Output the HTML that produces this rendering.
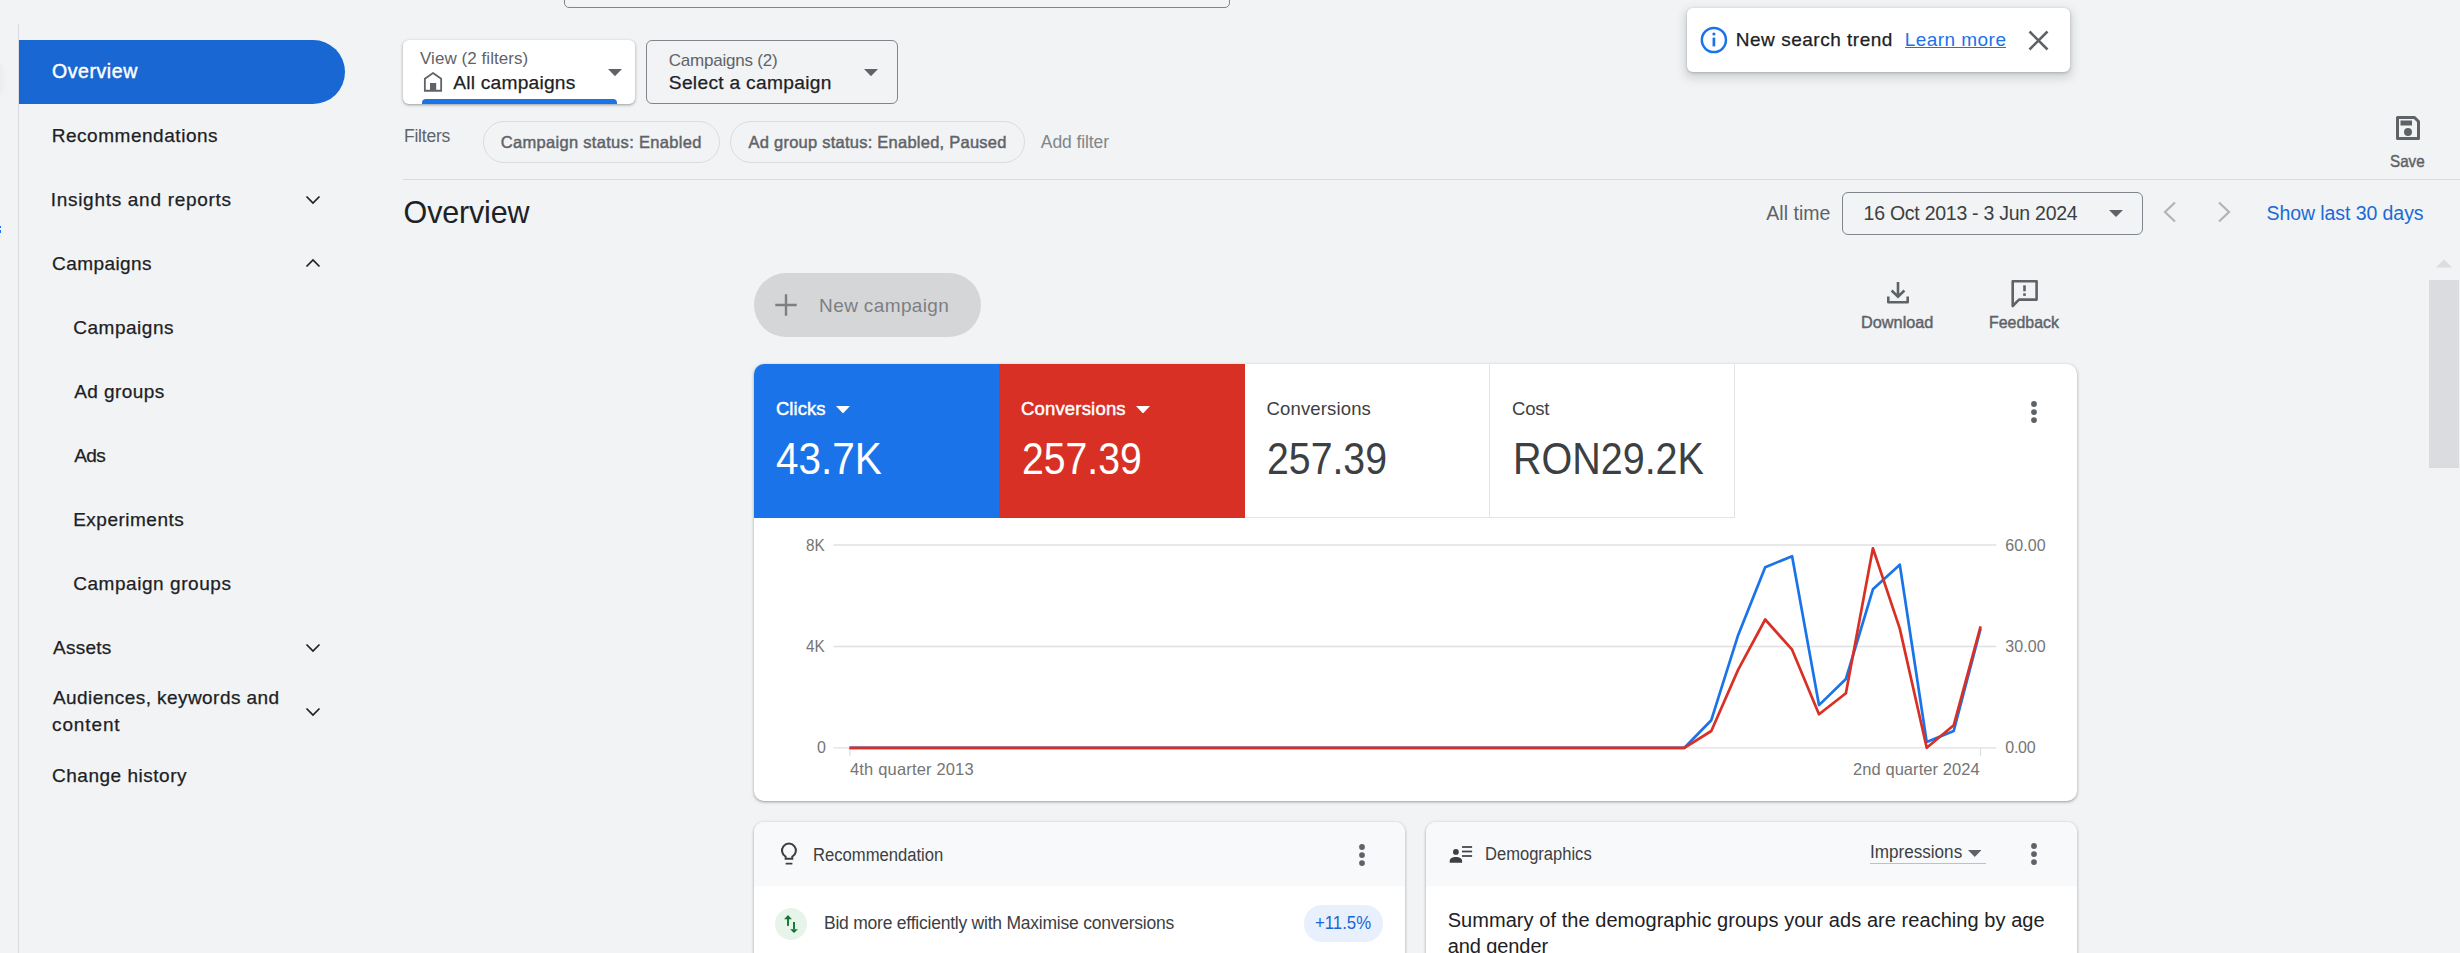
<!DOCTYPE html>
<html><head><meta charset='utf-8'><title>Overview - Google Ads</title>
<style>
html,body{margin:0;padding:0}
body{width:2460px;height:953px;overflow:hidden;background:#f1f3f4;position:relative;font-family:"Liberation Sans",sans-serif}
.t{position:absolute;white-space:nowrap}
.a{position:absolute;display:block}
.b{position:absolute;box-sizing:border-box}
</style></head><body>
<!-- left rail artifacts -->
<div class='b' style='left:-40px;top:50px;width:48px;height:60px;border-radius:50%;background:radial-gradient(closest-side,rgba(0,0,0,0.09),rgba(0,0,0,0))'></div>
<div class='b' style='left:0;top:226px;width:1px;height:2px;background:#1a73e8'></div>
<div class='b' style='left:0;top:230px;width:1px;height:3px;background:#1a73e8'></div>
<div class='b' style='left:18px;top:24px;width:1px;height:929px;background:#dadce0'></div>
<!-- nav -->
<div class='b' style='left:19px;top:40px;width:326px;height:64px;background:#1967d2;border-radius:0 32px 32px 0'></div>
<svg class='a' style='left:304.5px;top:194.5px' width='16' height='10' viewBox='0 0 16 10'><polyline points='1.5,1.5 8,8 14.5,1.5' fill='none' stroke='#202124' stroke-width='1.7'/></svg>
<svg class='a' style='left:304.5px;top:258px' width='16' height='10' viewBox='0 0 16 10'><polyline points='1.5,8.5 8,2 14.5,8.5' fill='none' stroke='#202124' stroke-width='1.7'/></svg>
<svg class='a' style='left:304.5px;top:642.5px' width='16' height='10' viewBox='0 0 16 10'><polyline points='1.5,1.5 8,8 14.5,1.5' fill='none' stroke='#202124' stroke-width='1.7'/></svg>
<svg class='a' style='left:304.5px;top:706.5px' width='16' height='10' viewBox='0 0 16 10'><polyline points='1.5,1.5 8,8 14.5,1.5' fill='none' stroke='#202124' stroke-width='1.7'/></svg>
<!-- search box remnant -->
<div class='b' style='left:564px;top:-50px;width:666px;height:58px;border:1.3px solid #80868b;border-radius:5px'></div>
<!-- view box -->
<div class='b' style='left:403px;top:40px;width:232px;height:64px;background:#fff;border-radius:6px;box-shadow:0 1px 2px rgba(60,64,67,.3),0 1px 3px 1px rgba(60,64,67,.15);overflow:hidden'>
  <div class='b' style='left:19px;top:59px;width:195px;height:6px;background:#1a73e8;border-radius:4px 4px 0 0'></div>
</div>
<svg class='a' style='left:423px;top:71px' width='20' height='22' viewBox='0 0 20 22'><path d='M10,2 L18.15,7.8 V19.75 H1.85 V7.8 Z' fill='none' stroke='#5f6368' stroke-width='1.8' stroke-linejoin='miter'/><rect x='7' y='12' width='6.2' height='8' fill='#5f6368'/></svg>
<svg class='a' style='left:607.5px;top:69px' width='14' height='7.2' viewBox='0 0 14 7.2'><polygon points='0,0 14,0 7.0,7.2' fill='#5f6368'/></svg>
<!-- campaigns box -->
<div class='b' style='left:646px;top:40px;width:252px;height:64px;border:1.3px solid #80868b;border-radius:6px'></div>
<svg class='a' style='left:863.5px;top:69px' width='14' height='7.2' viewBox='0 0 14 7.2'><polygon points='0,0 14,0 7.0,7.2' fill='#5f6368'/></svg>
<!-- filter chips -->
<div class='b' style='left:483px;top:121px;width:237px;height:42px;border:1px solid #dadce0;border-radius:21px'></div>
<div class='b' style='left:730px;top:121px;width:295px;height:42px;border:1px solid #dadce0;border-radius:21px'></div>
<div class='b' style='left:403px;top:179px;width:2057px;height:1px;background:#dadce0'></div>
<!-- save -->
<svg class='a' style='left:2394px;top:114px' width='28' height='28' viewBox='0 0 28 28'><path d='M3.5,3.5 H20.5 L24.5,7.5 V24.5 H3.5 Z' fill='none' stroke='#5f6368' stroke-width='3' stroke-linejoin='round'/><rect x='6.5' y='6.5' width='11.5' height='5' fill='#5f6368'/><circle cx='14' cy='18' r='4' fill='#5f6368'/></svg>
<!-- toast -->
<div class='b' style='left:1687px;top:8px;width:383px;height:64px;background:#fff;border-radius:6px;box-shadow:0 1px 3px 0 rgba(60,64,67,.3),0 4px 8px 3px rgba(60,64,67,.15)'></div>
<svg class='a' style='left:1699px;top:26px' width='30' height='30' viewBox='0 0 30 30'><circle cx='14.9' cy='14' r='12.05' fill='none' stroke='#1a73e8' stroke-width='2.5'/><rect x='13.55' y='11.6' width='2.7' height='8.8' fill='#1a73e8'/><circle cx='14.9' cy='8' r='1.6' fill='#1a73e8'/></svg>
<div class='b' style='left:1904.5px;top:47px;width:101.5px;height:1.4px;background:#1a73e8'></div>
<svg class='a' style='left:2027px;top:29px' width='23' height='23' viewBox='0 0 23 23'><path d='M2.5,2.5 L20.5,20.5 M20.5,2.5 L2.5,20.5' stroke='#5f6368' stroke-width='2.6'/></svg>
<!-- date -->
<div class='b' style='left:1842px;top:192px;width:301px;height:43px;border:1.3px solid #80868b;border-radius:6px'></div>
<svg class='a' style='left:2108.5px;top:210px' width='14' height='7' viewBox='0 0 14 7'><polygon points='0,0 14,0 7.0,7' fill='#5f6368'/></svg>
<svg class='a' style='left:2160px;top:200px' width='20' height='24' viewBox='0 0 20 24'><polyline points='15,2.5 5,12 15,21.5' fill='none' stroke='#b1b3b6' stroke-width='2.2'/></svg>
<svg class='a' style='left:2214px;top:200px' width='20' height='24' viewBox='0 0 20 24'><polyline points='5,2.5 15,12 5,21.5' fill='none' stroke='#b1b3b6' stroke-width='2.2'/></svg>
<!-- new campaign -->
<div class='b' style='left:754px;top:273px;width:227px;height:64px;background:#d5d6d8;border-radius:32px'></div>
<svg class='a' style='left:774px;top:293px' width='24' height='24' viewBox='0 0 24 24'><path d='M12,1.3 V22.7 M1.3,12 H22.7' stroke='#7d7f82' stroke-width='2.4'/></svg>
<!-- download / feedback -->
<svg class='a' style='left:1884px;top:279px' width='28' height='28' viewBox='0 0 28 28'><path d='M14,3 V17.5 M7.6,11.5 L14,17.8 L20.4,11.5' fill='none' stroke='#5f6368' stroke-width='2.6'/><path d='M4.3,17.5 V23.3 H23.7 V17.5' fill='none' stroke='#5f6368' stroke-width='2.6' stroke-linejoin='round'/></svg>
<svg class='a' style='left:2008px;top:277px' width='33' height='32' viewBox='0 0 33 32'><path d='M4.7,29 V4.2 H28.6 V22.6 H11 Z' fill='none' stroke='#5f6368' stroke-width='2.6' stroke-linejoin='round'/><rect x='15.2' y='8.3' width='2.6' height='6' fill='#5f6368'/><rect x='15.2' y='16.3' width='2.6' height='2.6' fill='#5f6368'/></svg>
<!-- main card -->
<div class='b' style='left:754px;top:364px;width:1323px;height:437px;background:#fff;border-radius:10px;box-shadow:0 1px 2px rgba(60,64,67,.3),0 1px 3px 1px rgba(60,64,67,.15);overflow:hidden'>
  <div class='b' style='left:0;top:0;width:245px;height:154px;background:#1a73e8'></div>
  <div class='b' style='left:245px;top:0;width:246px;height:154px;background:#d93025'></div>
  <div class='b' style='left:491px;top:153px;width:489px;height:1px;background:#e2e4e7'></div>
  <div class='b' style='left:735px;top:0;width:1px;height:154px;background:#e2e4e7'></div>
  <div class='b' style='left:980px;top:0;width:1px;height:154px;background:#e2e4e7'></div>
</div>
<svg class='a' style='left:836px;top:405.5px' width='14' height='7.5' viewBox='0 0 14 7.5'><polygon points='0,0 14,0 7.0,7.5' fill='#ffffff'/></svg>
<svg class='a' style='left:1135.5px;top:405.8px' width='14' height='7.5' viewBox='0 0 14 7.5'><polygon points='0,0 14,0 7.0,7.5' fill='#ffffff'/></svg>
<svg class='a' style='left:2029px;top:398.95px' width='10' height='26.1' viewBox='0 0 10 26.1'><circle cx='5' cy='5' r='2.9' fill='#5f6368'/><circle cx='5' cy='13.05' r='2.9' fill='#5f6368'/><circle cx='5' cy='21.1' r='2.9' fill='#5f6368'/></svg>
<!-- chart -->
<svg class='a' style='left:754px;top:364px' width='1323' height='436' viewBox='754 364 1323 436'>
 <g stroke='#e0e0e0' stroke-width='1.3'>
  <line x1='833.5' y1='545' x2='1996.3' y2='545'/>
  <line x1='833.5' y1='646.5' x2='1996.3' y2='646.5'/>
  <line x1='833.5' y1='747.8' x2='1996.3' y2='747.8'/>
  <line x1='849.9' y1='748' x2='849.9' y2='756'/>
  <line x1='1980.5' y1='748' x2='1980.5' y2='756'/>
 </g>
 <polyline points='849.5,747.8 876.4,747.8 903.4,747.8 930.3,747.8 957.2,747.8 984.2,747.8 1011.1,747.8 1038.0,747.8 1064.9,747.8 1091.9,747.8 1118.8,747.8 1145.7,747.8 1172.7,747.8 1199.6,747.8 1226.5,747.8 1253.5,747.8 1280.4,747.8 1307.3,747.8 1334.3,747.8 1361.2,747.8 1388.1,747.8 1415.0,747.8 1442.0,747.8 1468.9,747.8 1495.8,747.8 1522.8,747.8 1549.7,747.8 1576.6,747.8 1603.6,747.8 1630.5,747.8 1657.4,747.8 1684.4,747.8 1711.3,720.2 1738.2,634.9 1765.2,567.2 1792.1,556.2 1819.0,705.1 1845.9,679.0 1872.9,589.3 1899.8,564.7 1926.7,742.0 1953.7,731.0 1980.6,628.6' fill='none' stroke='#1a73e8' stroke-width='2.7' stroke-linejoin='round'/>
 <polyline points='849.5,747.8 876.4,747.8 903.4,747.8 930.3,747.8 957.2,747.8 984.2,747.8 1011.1,747.8 1038.0,747.8 1064.9,747.8 1091.9,747.8 1118.8,747.8 1145.7,747.8 1172.7,747.8 1199.6,747.8 1226.5,747.8 1253.5,747.8 1280.4,747.8 1307.3,747.8 1334.3,747.8 1361.2,747.8 1388.1,747.8 1415.0,747.8 1442.0,747.8 1468.9,747.8 1495.8,747.8 1522.8,747.8 1549.7,747.8 1576.6,747.8 1603.6,747.8 1630.5,747.8 1657.4,747.8 1684.4,747.8 1711.3,731.0 1738.2,669.6 1765.2,619.5 1792.1,649.7 1819.0,714.3 1845.9,693.2 1872.9,548.3 1899.8,628.6 1926.7,747.8 1953.7,725.3 1980.6,626.4' fill='none' stroke='#d93025' stroke-width='2.7' stroke-linejoin='round'/>
</svg>
<!-- recommendation card -->
<div class='b' style='left:754px;top:822px;width:651px;height:200px;background:#fff;border-radius:10px;box-shadow:0 1px 2px rgba(60,64,67,.3),0 1px 3px 1px rgba(60,64,67,.15);overflow:hidden'>
  <div class='b' style='left:0;top:0;width:651px;height:64px;background:#f8f9fa'></div>
  <div class='b' style='left:21px;top:86px;width:32px;height:32px;border-radius:50%;background:#e6f4ea'></div>
  <div class='b' style='left:550px;top:83px;width:79px;height:37px;border-radius:18px;background:#e8f0fe'></div>
</div>
<svg class='a' style='left:778px;top:841px' width='21' height='26' viewBox='0 0 21 26'><path d='M7.6,15.6 A6.95,6.95 0 1 1 14.3,15.6 V17.8 H7.6 Z' fill='none' stroke='#3c4043' stroke-width='2' stroke-linejoin='miter'/><rect x='7.5' y='21.7' width='7' height='1.9' rx='0.9' fill='#3c4043'/></svg>
<svg class='a' style='left:1357px;top:842.45px' width='10' height='26.1' viewBox='0 0 10 26.1'><circle cx='5' cy='5' r='2.9' fill='#5f6368'/><circle cx='5' cy='13.05' r='2.9' fill='#5f6368'/><circle cx='5' cy='21.1' r='2.9' fill='#5f6368'/></svg>
<svg class='a' style='left:780px;top:912px' width='22' height='24' viewBox='0 0 22 24'><polygon points='4.1,7.2 11.9,7.2 8,3' fill='#137333'/><rect x='7.05' y='7' width='1.9' height='6.9' fill='#137333'/><rect x='13.05' y='10' width='1.9' height='7.4' fill='#137333'/><polygon points='10.1,17.2 17.9,17.2 14,20.9' fill='#137333'/></svg>
<!-- demographics card -->
<div class='b' style='left:1426px;top:822px;width:651px;height:200px;background:#fff;border-radius:10px;box-shadow:0 1px 2px rgba(60,64,67,.3),0 1px 3px 1px rgba(60,64,67,.15);overflow:hidden'>
  <div class='b' style='left:0;top:0;width:651px;height:64px;background:#f8f9fa'></div>
</div>
<svg class='a' style='left:1448px;top:843px' width='26' height='22' viewBox='0 0 26 22'><circle cx='7.9' cy='8.9' r='2.9' fill='#3c4043'/><path d='M1.7,19.7 V18 C1.7,15.5 4.8,14.1 7.9,14.1 C11,14.1 14.1,15.5 14.1,18 V19.7 Z' fill='#3c4043'/><rect x='14' y='3.15' width='10.1' height='1.7' fill='#3c4043'/><rect x='14' y='7.65' width='10.1' height='1.7' fill='#3c4043'/><rect x='14' y='12.15' width='10.1' height='1.7' fill='#3c4043'/></svg>
<svg class='a' style='left:1967.5px;top:849.5px' width='13.5' height='7' viewBox='0 0 13.5 7'><polygon points='0,0 13.5,0 6.75,7' fill='#5f6368'/></svg>
<div class='b' style='left:1870px;top:863px;width:116px;height:1px;background:#bdc1c6'></div>
<svg class='a' style='left:2029px;top:840.95px' width='10' height='26.1' viewBox='0 0 10 26.1'><circle cx='5' cy='5' r='2.9' fill='#5f6368'/><circle cx='5' cy='13.05' r='2.9' fill='#5f6368'/><circle cx='5' cy='21.1' r='2.9' fill='#5f6368'/></svg>
<!-- scrollbar -->
<div class='b' style='left:2429px;top:280px;width:30px;height:188px;background:#dadce0'></div>
<svg class='a' style='left:2435px;top:259px' width='18' height='9' viewBox='0 0 18 9'><polygon points='1,8.5 17,8.5 9,0.5' fill='#dadce0'/></svg>
<div class='t' style='left:52.0px;top:62.0px;font-size:19.5px;line-height:19.5px;font-weight:400;-webkit-text-stroke:0.45px currentColor;color:#ffffff;letter-spacing:0.571px;'>Overview</div>
<div class='t' style='left:51.7px;top:126.1px;font-size:19px;line-height:19px;font-weight:400;-webkit-text-stroke:0.25px currentColor;color:#202124;letter-spacing:0.536px;'>Recommendations</div>
<div class='t' style='left:50.7px;top:190.0px;font-size:19px;line-height:19px;font-weight:400;-webkit-text-stroke:0.25px currentColor;color:#202124;letter-spacing:0.711px;'>Insights and reports</div>
<div class='t' style='left:52.0px;top:254.2px;font-size:19px;line-height:19px;font-weight:400;-webkit-text-stroke:0.25px currentColor;color:#202124;letter-spacing:0.438px;'>Campaigns</div>
<div class='t' style='left:73.2px;top:318.2px;font-size:19px;line-height:19px;font-weight:400;-webkit-text-stroke:0.25px currentColor;color:#202124;letter-spacing:0.525px;'>Campaigns</div>
<div class='t' style='left:74.2px;top:382.3px;font-size:19px;line-height:19px;font-weight:400;-webkit-text-stroke:0.25px currentColor;color:#202124;letter-spacing:0.425px;'>Ad groups</div>
<div class='t' style='left:74.2px;top:446.0px;font-size:19px;line-height:19px;font-weight:400;-webkit-text-stroke:0.25px currentColor;color:#202124;letter-spacing:-0.6px;'>Ads</div>
<div class='t' style='left:73.2px;top:510.2px;font-size:19px;line-height:19px;font-weight:400;-webkit-text-stroke:0.25px currentColor;color:#202124;letter-spacing:0.5px;'>Experiments</div>
<div class='t' style='left:73.2px;top:573.6px;font-size:19px;line-height:19px;font-weight:400;-webkit-text-stroke:0.25px currentColor;color:#202124;letter-spacing:0.557px;'>Campaign groups</div>
<div class='t' style='left:53.0px;top:638.0px;font-size:19px;line-height:19px;font-weight:400;-webkit-text-stroke:0.25px currentColor;color:#202124;letter-spacing:0.24px;'>Assets</div>
<div class='t' style='left:53.0px;top:687.7px;font-size:19px;line-height:19px;font-weight:400;-webkit-text-stroke:0.25px currentColor;color:#202124;letter-spacing:0.436px;'>Audiences, keywords and</div>
<div class='t' style='left:52.0px;top:714.5px;font-size:19px;line-height:19px;font-weight:400;-webkit-text-stroke:0.25px currentColor;color:#202124;letter-spacing:0.883px;'>content</div>
<div class='t' style='left:52.0px;top:766.1px;font-size:19px;line-height:19px;font-weight:400;-webkit-text-stroke:0.25px currentColor;color:#202124;letter-spacing:0.515px;'>Change history</div>
<div class='t' style='left:420.0px;top:50.2px;font-size:17px;line-height:17px;font-weight:400;color:#5f6368;letter-spacing:0.06px;'>View (2 filters)</div>
<div class='t' style='left:453.3px;top:72.9px;font-size:19.2px;line-height:19.2px;font-weight:400;-webkit-text-stroke:0.25px currentColor;color:#202124;letter-spacing:0.208px;'>All campaigns</div>
<div class='t' style='left:668.8px;top:51.8px;font-size:17px;line-height:17px;font-weight:400;color:#5f6368;letter-spacing:-0.217px;'>Campaigns (2)</div>
<div class='t' style='left:668.8px;top:72.9px;font-size:19.2px;line-height:19.2px;font-weight:400;-webkit-text-stroke:0.25px currentColor;color:#202124;letter-spacing:0.294px;'>Select a campaign</div>
<div class='t' style='left:404.0px;top:128.2px;font-size:17.5px;line-height:17.5px;font-weight:400;color:#5f6368;letter-spacing:-0.233px;'>Filters</div>
<div class='t' style='left:500.7px;top:133.8px;font-size:16.5px;line-height:16.5px;font-weight:400;-webkit-text-stroke:0.45px currentColor;color:#5f6368;letter-spacing:0.309px;'>Campaign status: Enabled</div>
<div class='t' style='left:748.5px;top:133.8px;font-size:16.5px;line-height:16.5px;font-weight:400;-webkit-text-stroke:0.45px currentColor;color:#5f6368;letter-spacing:0.242px;'>Ad group status: Enabled, Paused</div>
<div class='t' style='left:1040.8px;top:133.8px;font-size:17.5px;line-height:17.5px;font-weight:400;color:#80868b;letter-spacing:-0.089px;'>Add filter</div>
<div class='t' style='left:2390.0px;top:152.8px;font-size:16.5px;line-height:16.5px;font-weight:400;-webkit-text-stroke:0.45px currentColor;color:#5f6368;letter-spacing:0px;transform:scaleX(0.9211);transform-origin:0 0;'>Save</div>
<div class='t' style='left:1735.8px;top:29.8px;font-size:19px;line-height:19px;font-weight:400;-webkit-text-stroke:0.25px currentColor;color:#202124;letter-spacing:0.513px;'>New search trend</div>
<div class='t' style='left:1904.7px;top:29.8px;font-size:19px;line-height:19px;font-weight:400;color:#1a73e8;letter-spacing:0.456px;'>Learn more</div>
<div class='t' style='left:403.6px;top:196.9px;font-size:30.5px;line-height:30.5px;font-weight:400;color:#202124;letter-spacing:-0.171px;'>Overview</div>
<div class='t' style='left:1766.3px;top:203.8px;font-size:19.5px;line-height:19.5px;font-weight:400;color:#5f6368;letter-spacing:0.029px;'>All time</div>
<div class='t' style='left:1863.6px;top:203.8px;font-size:19.5px;line-height:19.5px;font-weight:400;color:#3c4043;letter-spacing:-0.261px;'>16 Oct 2013 - 3 Jun 2024</div>
<div class='t' style='left:2266.5px;top:204.1px;font-size:19.5px;line-height:19.5px;font-weight:400;color:#1a6ad8;letter-spacing:-0.075px;'>Show last 30 days</div>
<div class='t' style='left:819.1px;top:295.9px;font-size:19px;line-height:19px;font-weight:400;color:#7d7f82;letter-spacing:0.373px;'>New campaign</div>
<div class='t' style='left:1861.2px;top:314.1px;font-size:17px;line-height:17px;font-weight:400;-webkit-text-stroke:0.45px currentColor;color:#5f6368;letter-spacing:0px;transform:scaleX(0.9579);transform-origin:0 0;'>Download</div>
<div class='t' style='left:1988.8px;top:314.1px;font-size:17px;line-height:17px;font-weight:400;-webkit-text-stroke:0.45px currentColor;color:#5f6368;letter-spacing:0px;transform:scaleX(0.9368);transform-origin:0 0;'>Feedback</div>
<div class='t' style='left:775.9px;top:399.5px;font-size:18.5px;line-height:18.5px;font-weight:400;-webkit-text-stroke:0.45px currentColor;color:#ffffff;letter-spacing:0.08px;'>Clicks</div>
<div class='t' style='left:776.4px;top:437.1px;font-size:44px;line-height:44px;font-weight:400;color:#ffffff;letter-spacing:0px;transform:scaleX(0.9209);transform-origin:0 0;'>43.7K</div>
<div class='t' style='left:1020.9px;top:399.7px;font-size:18.5px;line-height:18.5px;font-weight:400;-webkit-text-stroke:0.45px currentColor;color:#ffffff;letter-spacing:0.19px;'>Conversions</div>
<div class='t' style='left:1021.7px;top:437.0px;font-size:44px;line-height:44px;font-weight:400;color:#ffffff;letter-spacing:0px;transform:scaleX(0.8902);transform-origin:0 0;'>257.39</div>
<div class='t' style='left:1266.5px;top:400.3px;font-size:18.5px;line-height:18.5px;font-weight:400;color:#3c4043;letter-spacing:0.15px;'>Conversions</div>
<div class='t' style='left:1266.5px;top:437.0px;font-size:44px;line-height:44px;font-weight:400;color:#3c4043;letter-spacing:0px;transform:scaleX(0.8917);transform-origin:0 0;'>257.39</div>
<div class='t' style='left:1512.0px;top:400.3px;font-size:18.5px;line-height:18.5px;font-weight:400;color:#3c4043;letter-spacing:-0.233px;'>Cost</div>
<div class='t' style='left:1513.2px;top:437.0px;font-size:44px;line-height:44px;font-weight:400;color:#3c4043;letter-spacing:0px;transform:scaleX(0.8972);transform-origin:0 0;'>RON29.2K</div>
<div class='t' style='left:806.4px;top:538.3px;font-size:16px;line-height:16px;font-weight:400;color:#757575;letter-spacing:0px;transform:scaleX(0.955);transform-origin:0 0;'>8K</div>
<div class='t' style='left:806.4px;top:639.0px;font-size:16px;line-height:16px;font-weight:400;color:#757575;letter-spacing:0px;transform:scaleX(0.955);transform-origin:0 0;'>4K</div>
<div class='t' style='left:817.1px;top:740.3px;font-size:16px;line-height:16px;font-weight:400;color:#757575;letter-spacing:-0.6px;'>0</div>
<div class='t' style='left:2005.3px;top:538.3px;font-size:16px;line-height:16px;font-weight:400;color:#757575;letter-spacing:0.05px;'>60.00</div>
<div class='t' style='left:2005.3px;top:639.0px;font-size:16px;line-height:16px;font-weight:400;color:#757575;letter-spacing:0.05px;'>30.00</div>
<div class='t' style='left:2005.3px;top:740.3px;font-size:16px;line-height:16px;font-weight:400;color:#757575;letter-spacing:-0.267px;'>0.00</div>
<div class='t' style='left:850.0px;top:761.0px;font-size:16.5px;line-height:16.5px;font-weight:400;color:#757575;letter-spacing:0.167px;'>4th quarter 2013</div>
<div class='t' style='left:1853.0px;top:761.0px;font-size:16.5px;line-height:16.5px;font-weight:400;color:#757575;letter-spacing:0.067px;'>2nd quarter 2024</div>
<div class='t' style='left:813.2px;top:845.5px;font-size:18px;line-height:18px;font-weight:400;color:#3c4043;letter-spacing:0px;transform:scaleX(0.9234);transform-origin:0 0;'>Recommendation</div>
<div class='t' style='left:824.0px;top:915.4px;font-size:17.5px;line-height:17.5px;font-weight:400;color:#3c4043;letter-spacing:-0.227px;'>Bid more efficiently with Maximise conversions</div>
<div class='t' style='left:1315.0px;top:915.4px;font-size:17.5px;line-height:17.5px;font-weight:400;color:#1967d2;letter-spacing:0px;transform:scaleX(0.9576);transform-origin:0 0;'>+11.5%</div>
<div class='t' style='left:1485.2px;top:845.3px;font-size:18px;line-height:18px;font-weight:400;color:#3c4043;letter-spacing:0px;transform:scaleX(0.919);transform-origin:0 0;'>Demographics</div>
<div class='t' style='left:1870.0px;top:843.0px;font-size:18px;line-height:18px;font-weight:400;color:#3c4043;letter-spacing:0px;transform:scaleX(0.95);transform-origin:0 0;'>Impressions</div>
<div class='t' style='left:1447.7px;top:910.2px;font-size:20px;line-height:20px;font-weight:400;color:#202124;letter-spacing:0.054px;'>Summary of the demographic groups your ads are reaching by age</div>
<div class='t' style='left:1447.7px;top:936.0px;font-size:20px;line-height:20px;font-weight:400;color:#202124;letter-spacing:-0.089px;'>and gender</div>
</body></html>
